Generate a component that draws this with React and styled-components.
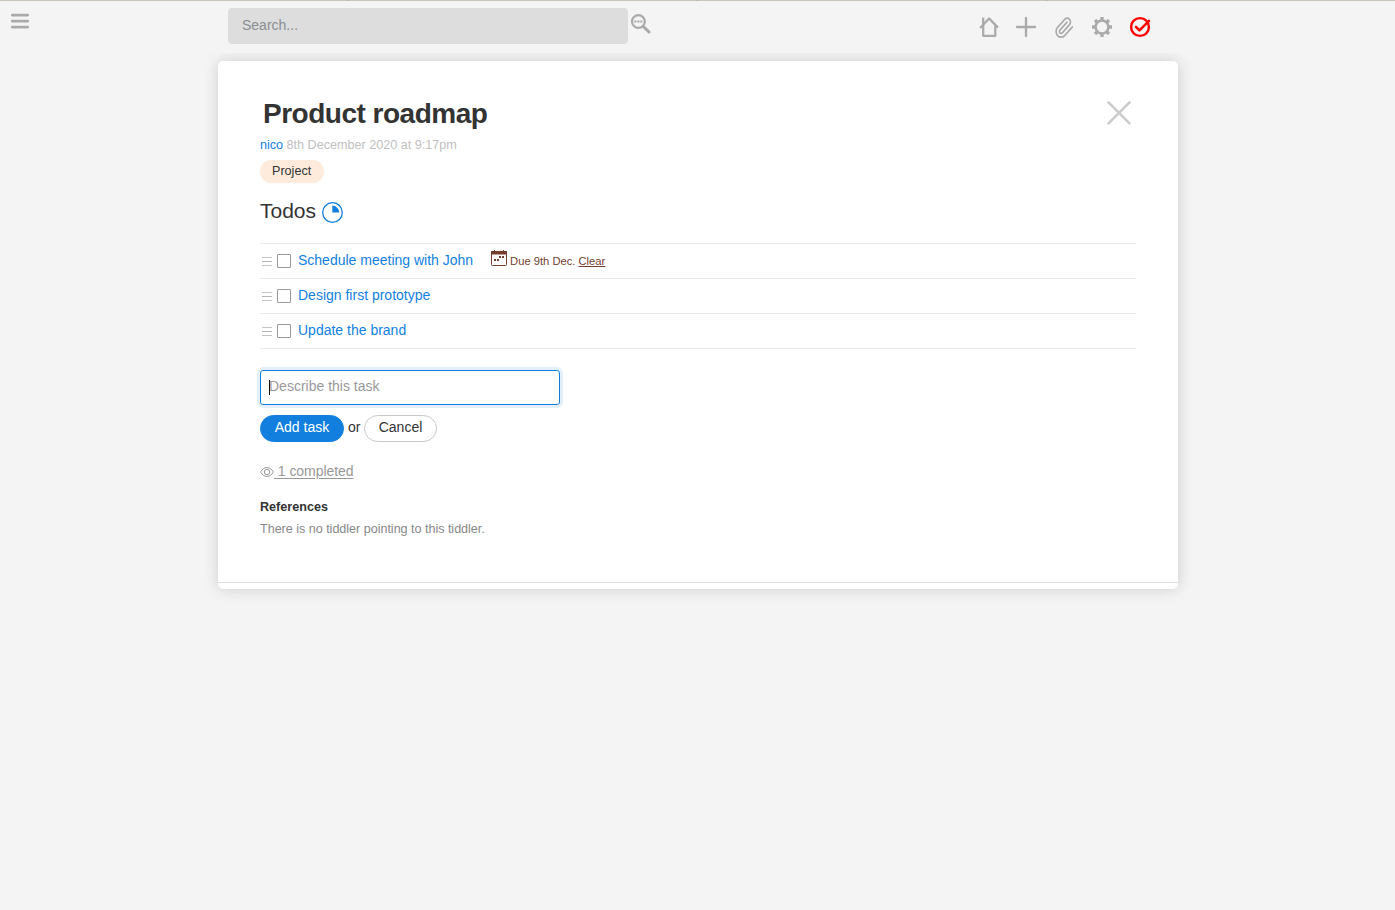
import React from "react";
import styled, { createGlobalStyle, css } from "styled-components";

const GlobalStyle = createGlobalStyle`
  * { box-sizing: border-box; }
  html, body { margin: 0; padding: 0; background: #f4f4f4; }
  body {
    font-family: "Liberation Sans", Arial, sans-serif;
    font-size: 14px;
    line-height: 20px;
    color: #333;
  }
`;

const Page = styled.div`
  min-height: 910px;
  background: #f4f4f4;
`;

const WindowEdge = styled.div`
  display: grid;
  grid-template-columns: 348px 350px 349px 1fr;
  height: 1px;
  background: #cac5bc;
`;

const EdgeSegment = styled.span`
  border-right: 1px solid #aaa59c;
  &:last-child { border-right: 0; }
`;

const Header = styled.header`
  position: relative;
  z-index: 1;
  display: flex;
  align-items: flex-start;
  height: 52px;
  padding: 7px 243px 0 9px;
  background: #f4f4f4;
`;

const IconButton = styled.button`
  display: block;
  flex: none;
  padding: 0;
  border: 0;
  background: none;
  line-height: 0;
  color: ${(p) => p.$color || "#aaa"};
`;

const MenuSlot = styled.div`
  width: 219px;
  padding-top: 2px;
`;

const inputText = css`
  font: 14px/20px "Liberation Sans", Arial, sans-serif;
  outline: 0;
`;

const SearchInput = styled.input`
  ${inputText}
  width: 400px;
  height: 36px;
  padding: 0 14px 2px;
  border: 0;
  border-radius: 4px;
  background: #ddd;
  &::placeholder { color: #888e92; opacity: 1; }
`;

const SearchSlot = styled.div`
  padding: 4px 0 0 2px;
`;

const Toolbar = styled.nav`
  display: flex;
  gap: 14px;
  margin-left: auto;
  padding-top: 7px;
`;

const Card = styled.main`
  width: 960px;
  height: 528px;
  margin: 8px 0 0 218px;
  padding: 35px 42px 0;
  display: flex;
  flex-direction: column;
  border-radius: 5px;
  background: #fff;
  box-shadow: 0 0 15px rgba(0, 0, 0, 0.16);
`;

const TitleRow = styled.div`
  display: flex;
  justify-content: space-between;
  height: 39px;
  padding: 0 3px 0 3px;
`;

const Title = styled.h1`
  margin: 0;
  font-size: 28px;
  line-height: 35px;
  letter-spacing: -0.5px;
  font-weight: 700;
`;

const Subtitle = styled.div`
  height: 24px;
  font-size: 12.6px;
  line-height: 20px;
  color: #c0c0c0;
`;

const Link = styled.a`
  color: #127fdf;
`;

const Tag = styled.span`
  align-self: flex-start;
  height: 23px;
  margin-top: 1px;
  padding: 0 12.5px 0 12px;
  border-radius: 12px;
  background: #ffebdc;
  font-size: 12.6px;
  line-height: 22px;
`;

const SectionTitle = styled.h2`
  display: flex;
  gap: 6px;
  height: 60px;
  margin: 0;
  padding-top: 14px;
  font-size: 21px;
  font-weight: 400;
  line-height: 28px;
  svg { margin-top: 5px; }
`;

const TaskList = styled.ul`
  margin: 0;
  padding: 0;
  list-style: none;
  border-top: 1px solid #e9e9e9;
`;

const TaskRow = styled.li`
  display: flex;
  align-items: flex-start;
  height: 35px;
  padding: 6px 0 0 2px;
  border-bottom: 1px solid #e9e9e9;
`;

const Handle = styled.span`
  width: 10px;
  height: 9px;
  margin-top: 7px;
  border: solid #c4c4c4;
  border-width: 1px 0;
  display: flex;
  align-items: center;
  &::before {
    content: "";
    width: 100%;
    height: 1px;
    background: #b4b4b4;
  }
`;

const Checkbox = styled.input.attrs({ type: "checkbox" })`
  appearance: none;
  width: 14px;
  height: 14px;
  margin: 4px 7px 0 5px;
  border: 1px solid #999;
  border-radius: 1px;
  background: #fff;
`;

const DueDate = styled.span`
  display: flex;
  gap: 3px;
  margin-left: 18px;
  color: #733e2e;
  font-size: 11.2px;
  line-height: 22px;
`;

const Clear = styled.u`
  text-underline-offset: 1px;
`;

const TaskInput = styled.input`
  ${inputText}
  width: 298px;
  height: 33px;
  padding: 0 7px 3px 8px;
  border: 0;
  background: none;
  &::placeholder { color: #999; opacity: 1; }
`;

const TaskField = styled.div`
  display: flex;
  position: relative;
  flex: none;
  width: 300px;
  height: 35px;
  margin-top: 21px;
  border: 1px solid #127fdf;
  border-radius: 3px;
  box-shadow: 0 0 0 3px #e4effc;
`;

const Caret = styled.span`
  position: absolute;
  left: 8px;
  top: 9px;
  width: 1px;
  height: 15px;
  background: #111;
`;

const Actions = styled.div`
  display: flex;
  gap: 4px;
  height: 27px;
  margin-top: 10px;
  line-height: 24px;
`;

const PillButton = styled.button`
  font: inherit;
  line-height: 20px;
  height: 27px;
  width: ${(p) => (p.$primary ? "84px" : "73px")};
  padding: 0 0 3px;
  border: 1px solid ${(p) => (p.$primary ? "#127fdf" : "#c8c8c8")};
  border-radius: 14px;
  background: ${(p) => (p.$primary ? "#127fdf" : "#fff")};
  color: ${(p) => (p.$primary ? "#fff" : "#333")};
`;

const Conjunction = styled.span`
  width: 12px;
`;

const Completed = styled.div`
  display: flex;
  height: 20px;
  margin-top: 19px;
  color: #999;
  svg { margin-top: 5px; }
`;

const CompletedText = styled.span`
  white-space: pre;
  letter-spacing: -0.05px;
  text-decoration: underline;
  text-underline-offset: 2px;
`;

const ReferencesTitle = styled.h3`
  margin: 16px 0 2px;
  font-size: 12.6px;
  line-height: 20px;
`;

const Note = styled.p`
  margin: 0;
  font-size: 12.6px;
  letter-spacing: -0.03px;
  line-height: 20px;
  color: #888;
`;

const CardFooter = styled.div`
  height: 7px;
  margin: auto -42px 0;
  border-top: 1px solid #ddd;
`;

const Svg = ({ w, h, children }) => (
  <svg width={w} height={h} viewBox={`0 0 ${w} ${h}`} fill="none" stroke="currentColor">
    {children}
  </svg>
);

const MenuIcon = () => (
  <Svg w={22} h={22}>
    <path d="M3.2 5.1h15.6M3.2 11.1h15.6M3.2 17.1h15.6" strokeWidth="2.6" strokeLinecap="round" />
  </Svg>
);

const SearchIcon = () => (
  <Svg w={22} h={22}>
    <circle cx="8.4" cy="9.5" r="6.4" strokeWidth="2.2" />
    <path d="M13.4 14.5L19 20" strokeWidth="3" strokeLinecap="round" />
    <path d="M4.3 9.5h2.1M7.3 9.5h2.1M10.3 9.5h2.1" strokeWidth="2" />
  </Svg>
);

const HomeIcon = () => (
  <Svg w={24} h={24}>
    <path d="M4.8 12.3L13.1 3.5l8.2 8.4" strokeWidth="2.3" strokeLinecap="round" strokeLinejoin="round" />
    <path d="M7.2 2.6v18.2h12.1V10" strokeWidth="2.3" strokeLinejoin="round" />
  </Svg>
);

const PlusIcon = () => (
  <Svg w={24} h={24}>
    <path d="M12 3v18M3 12h18" strokeWidth="2.3" strokeLinecap="round" />
  </Svg>
);

const ClipIcon = () => (
  <Svg w={24} h={24}>
    <path
      transform="translate(2.4 1.3) scale(.84 .95)"
      d="m21.44 11.05-9.19 9.19a6 6 0 0 1-8.49-8.49l8.57-8.57A4 4 0 1 1 18 8.84l-8.59 8.57a2 2 0 0 1-2.83-2.83l8.49-8.48"
      strokeWidth="1.9"
      strokeLinecap="round"
      strokeLinejoin="round"
    />
  </Svg>
);

const GearIcon = () => (
  <Svg w={24} h={24}>
    <circle cx="12" cy="12" r="6.4" strokeWidth="2.5" />
    <path
      d="M12 5V2M12 19v3M5 12H2M19 12h3M7.1 7.1L5 5M16.9 7.1L19 5M7.1 16.9L5 19M16.9 16.9L19 19"
      strokeWidth="3.3"
    />
  </Svg>
);

const SavedIcon = () => (
  <Svg w={24} h={24}>
    <circle cx="12" cy="12" r="8.9" strokeWidth="2.4" />
    <path d="M8 11.8l3.5 3.6L21 5.8" strokeWidth="2.5" strokeLinecap="round" strokeLinejoin="round" />
  </Svg>
);

const CloseIcon = () => (
  <Svg w={28} h={34}>
    <path d="M3.5 6.4l21 21M24.5 6.4l-21 21" strokeWidth="2.7" strokeLinecap="round" />
  </Svg>
);

const ProgressIcon = () => (
  <svg width="21" height="21" viewBox="0 0 21 21" fill="none">
    <circle cx="10.5" cy="10.5" r="9.8" stroke="#127fdf" strokeWidth="1.3" />
    <path d="M10.3 3.6a7 7 0 0 1 7 7h-7z" fill="#127fdf" />
  </svg>
);

const CalendarIcon = () => (
  <svg width="16" height="16" viewBox="0 0 16 16" fill="none">
    <rect x=".5" y="1.5" width="15" height="14" rx="1" stroke="currentColor" />
    <path fill="currentColor" d="M0 1h16v3.6H0zM3 0h1v1H3zM12 0h1v1h-1zM3 9h2v2H3zM6 9h2v2H6zM8 6h2v2H8zM11 6h2v2h-2z" />
  </svg>
);

const EyeIcon = () => (
  <Svg w={14} h={12}>
    <path d="M.6 6C3.8.1 10.2.1 13.4 6 10.2 11.9 3.8 11.9.6 6z" />
    <circle cx="7" cy="6" r="2.7" />
  </Svg>
);

const CloseSlot = styled.div`
  height: 34px;
`;

const tools = [
  { name: "Home", Icon: HomeIcon },
  { name: "New", Icon: PlusIcon },
  { name: "Attach", Icon: ClipIcon },
  { name: "Settings", Icon: GearIcon },
  { name: "Save", Icon: SavedIcon, color: "#f00" },
];

const tasks = [
  { title: "Schedule meeting with John", due: "Due 9th Dec." },
  { title: "Design first prototype" },
  { title: "Update the brand" },
];

export default function App() {
  return (
    <Page>
      <GlobalStyle />
      <WindowEdge>
        <EdgeSegment />
        <EdgeSegment />
        <EdgeSegment />
        <EdgeSegment />
      </WindowEdge>
      <Header>
        <MenuSlot>
          <IconButton><MenuIcon /></IconButton>
        </MenuSlot>
        <SearchInput placeholder="Search..." />
        <SearchSlot>
          <IconButton><SearchIcon /></IconButton>
        </SearchSlot>
        <Toolbar>
          {tools.map(({ name, Icon, color }) => (
            <IconButton key={name} $color={color}><Icon /></IconButton>
          ))}
        </Toolbar>
      </Header>
      <Card>
        <TitleRow>
          <Title>Product roadmap</Title>
          <CloseSlot>
            <IconButton $color="#ccc"><CloseIcon /></IconButton>
          </CloseSlot>
        </TitleRow>
        <Subtitle>
          <Link>nico</Link> 8th December 2020 at 9:17pm
        </Subtitle>
        <Tag>Project</Tag>
        <SectionTitle>
          Todos <ProgressIcon />
        </SectionTitle>
        <TaskList>
          {tasks.map((task) => (
            <TaskRow key={task.title}>
              <Handle />
              <Checkbox />
              <Link>{task.title}</Link>
              {task.due && (
                <DueDate>
                  <CalendarIcon />
                  <span>
                    {task.due} <Clear>Clear</Clear>
                  </span>
                </DueDate>
              )}
            </TaskRow>
          ))}
        </TaskList>
        <TaskField>
          <TaskInput placeholder="Describe this task" />
          <Caret />
        </TaskField>
        <Actions>
          <PillButton $primary>Add task</PillButton>
          <Conjunction>or</Conjunction>
          <PillButton>Cancel</PillButton>
        </Actions>
        <Completed>
          <EyeIcon />
          <CompletedText> 1 completed</CompletedText>
        </Completed>
        <ReferencesTitle>References</ReferencesTitle>
        <Note>There is no tiddler pointing to this tiddler.</Note>
        <CardFooter />
      </Card>
    </Page>
  );
}
